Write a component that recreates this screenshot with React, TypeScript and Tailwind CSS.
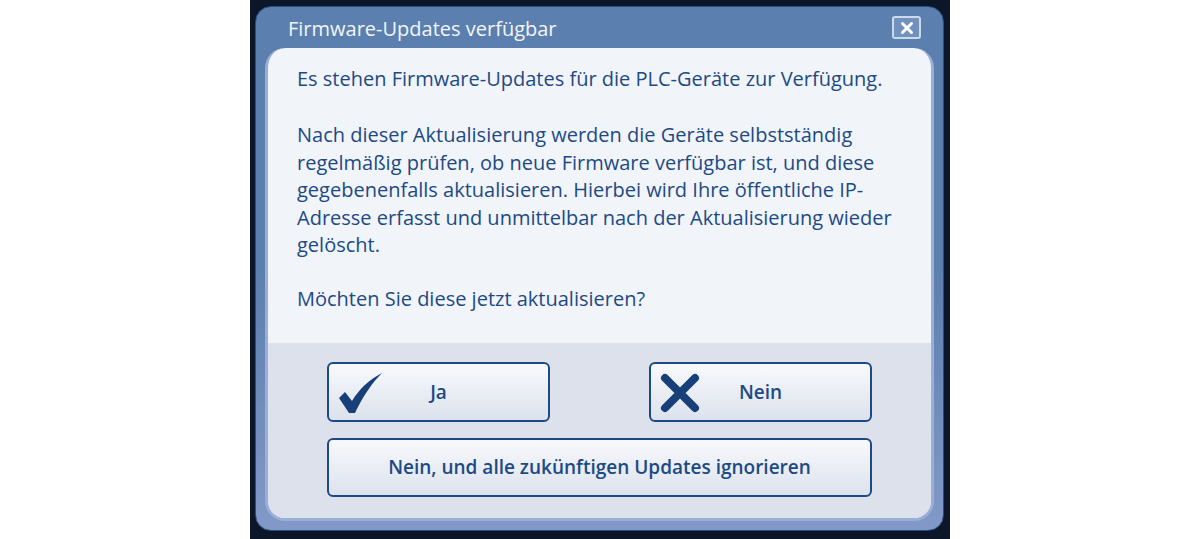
import { X } from "lucide-react";

const font = { fontFamily: '"Open Sans", "Noto Sans", sans-serif' };

function CheckIcon() {
  return (
    <svg width="46" height="42" viewBox="0 0 46 42" className="shrink-0">
      <path
        d="M2 26 L8 20 L15 29 C23 16 32 8 45 1 C35 11 26 24 18 41 L12 41 Z"
        fill="#173f78"
      />
    </svg>
  );
}

function CrossIcon() {
  return (
    <svg width="42" height="42" viewBox="0 0 42 42" className="shrink-0">
      <path
        d="M6 6 L36 36 M36 6 L6 36"
        stroke="#173f78"
        strokeWidth="8"
        strokeLinecap="round"
      />
    </svg>
  );
}

function DialogButton({
  label,
  icon,
  className,
}: {
  label: string;
  icon?: React.ReactNode;
  className?: string;
}) {
  return (
    <button
      className={`relative flex items-center justify-center rounded-[6px] border-2 border-[#1d4a85] bg-gradient-to-b from-[#f8f9fc] to-[#dce2ec] text-[19px] font-semibold text-[#1d4a85] ${className}`}
      style={font}
    >
      {icon && <span className="absolute left-[8px] top-[8px]">{icon}</span>}
      {label}
    </button>
  );
}

export default function App() {
  return (
    <div className="flex h-[539px] w-[1200px] justify-center bg-white" style={font}>
      <div className="h-[539px] w-[700px] bg-[#0b1729] pl-[5px] pt-[6px]">
        <div className="flex h-[525px] w-[689px] flex-col rounded-[16px] border border-[#2c4d7e] bg-gradient-to-b from-[#5b7fae] via-[#5b7fae] to-[#8299c8] px-[9px] pb-[9px]">
          {/* Title bar */}
          <div className="flex h-[41px] items-center justify-between pl-[23px] pr-[13px]">
            <h1 className="pt-[2px] text-[20px] text-[#f3f6fb]">Firmware-Updates verfügbar</h1>
            <div className="flex h-[23px] w-[29px] items-center justify-center rounded-[3px] border-2 border-[#cdd8ea] bg-[#7192be]">
              <X className="h-[18px] w-[18px] text-white" strokeWidth={4} />
            </div>
          </div>

          {/* Content panel */}
          <div className="flex flex-1 flex-col overflow-hidden rounded-[20px] border-[3px] border-t-0 border-[#9aaed6] bg-[#f1f4f9]">
            <div className="h-[295px] px-[29px] pt-[17px] text-[20px] leading-[27.5px] text-[#1d4a85]">
              <p className="mb-[28.5px] whitespace-nowrap">Es stehen Firmware-Updates für die PLC-Geräte zur Verfügung.</p>
              <p className="mb-[26.5px] whitespace-nowrap">
                Nach dieser Aktualisierung werden die Geräte selbstständig
                <br />
                regelmäßig prüfen, ob neue Firmware verfügbar ist, und diese
                <br />
                gegebenenfalls aktualisieren. Hierbei wird Ihre öffentliche IP-
                <br />
                Adresse erfasst und unmittelbar nach der Aktualisierung wieder
                <br />
                gelöscht.
              </p>
              <p>Möchten Sie diese jetzt aktualisieren?</p>
            </div>

            <div className="flex flex-1 flex-col gap-[16px] bg-[#dce1eb] pl-[59px] pt-[19px]">
              <div className="flex gap-[99px]">
                <DialogButton label="Ja" icon={<CheckIcon />} className="h-[60px] w-[223px]" />
                <DialogButton label="Nein" icon={<CrossIcon />} className="h-[60px] w-[223px]" />
              </div>
              <DialogButton
                label="Nein, und alle zukünftigen Updates ignorieren"
                className="h-[59px] w-[545px]"
              />
            </div>
          </div>
        </div>
      </div>
    </div>
  );
}
